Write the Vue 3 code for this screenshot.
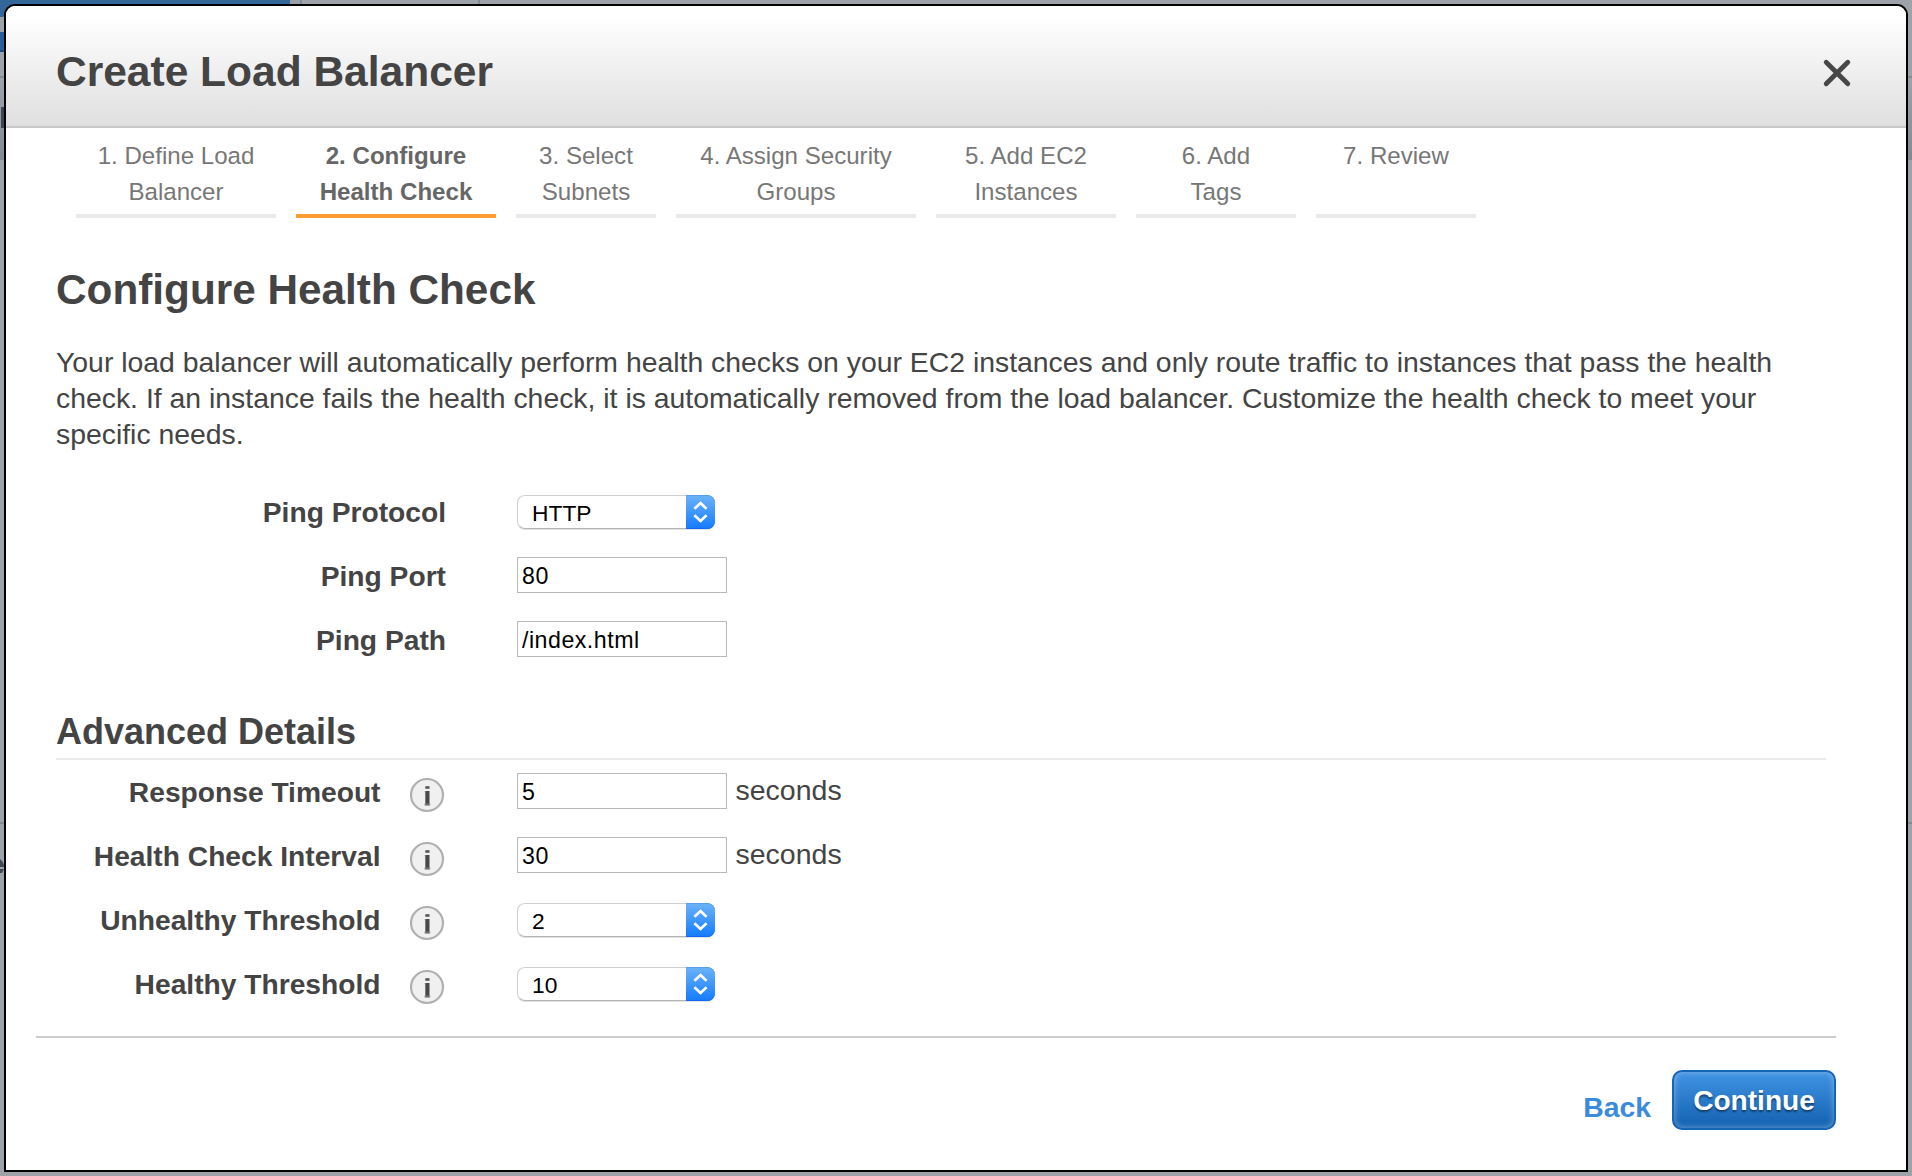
<script setup>
import { reactive } from 'vue'

const steps = [
  { lines: ['1. Define Load', 'Balancer'], width: 200 },
  { lines: ['2. Configure', 'Health Check'], width: 200, active: true },
  { lines: ['3. Select', 'Subnets'], width: 140 },
  { lines: ['4. Assign Security', 'Groups'], width: 240 },
  { lines: ['5. Add EC2', 'Instances'], width: 180 },
  { lines: ['6. Add', 'Tags'], width: 160 },
  { lines: ['7. Review'], width: 160 },
]

const pingFields = reactive([
  { label: 'Ping Protocol', type: 'select', value: 'HTTP' },
  { label: 'Ping Port', type: 'text', value: '80' },
  { label: 'Ping Path', type: 'text', value: '/index.html' },
])

const advancedFields = reactive([
  { label: 'Response Timeout', type: 'text', value: '5', unit: 'seconds' },
  { label: 'Health Check Interval', type: 'text', value: '30', unit: 'seconds' },
  { label: 'Unhealthy Threshold', type: 'select', value: '2' },
  { label: 'Healthy Threshold', type: 'select', value: '10' },
])

const groups = [
  { key: 'ping', fields: pingFields },
  { key: 'advanced', title: 'Advanced Details', fields: advancedFields, info: true },
]
</script>

<template>
  <div class="screen">
    <svg class="backdrop" width="1912" height="1176" aria-hidden="true">
      <defs>
        <linearGradient id="band" x1="0" y1="0" x2="0" y2="1">
          <stop offset="0" stop-color="#9ea2ab" />
          <stop offset="1" stop-color="#858993" />
        </linearGradient>
      </defs>
      <rect width="290" height="17" fill="#336699" />
      <rect x="290" width="10" height="5" fill="#9aa0a8" />
      <rect x="300" width="2" height="5" fill="#868a90" />
      <rect x="478" width="2" height="5" fill="#868a90" />
      <rect y="32" width="6" height="20" fill="#2a5e96" />
      <rect y="50" width="6" height="2" fill="#1f4c80" />
      <rect y="76" width="1912" height="2" fill="#858991" />
      <rect y="78" width="1912" height="80" fill="url(#band)" />
      <rect x="1" y="107" width="4" height="21" fill="#3f454e" />
      <rect y="158" width="1912" height="2" fill="#858991" />
      <rect y="822" width="1912" height="2" fill="#858991" />
      <path d="M0 859q4 3 4 8H0zM0 869h4l-2 4H0z" fill="#3f4754" />
    </svg>

    <section class="dialog" role="dialog">
      <header class="head">
        <h1>Create Load Balancer</h1>
        <svg class="close" width="30" height="30" viewBox="0 0 30 30">
          <path d="M4.2 4.2 25.8 25.8M25.8 4.2 4.2 25.8" fill="none" stroke="#484848" stroke-width="4.8" stroke-linecap="round" />
        </svg>
      </header>

      <nav class="steps">
        <div
          v-for="s in steps"
          :key="s.lines[0]"
          class="step"
          :class="{ active: s.active }"
          :style="{ width: s.width + 'px' }"
        >
          <div v-for="l in s.lines" :key="l">{{ l }}</div>
        </div>
      </nav>

      <main class="content">
        <h2>Configure Health Check</h2>
        <p class="intro">
          Your load balancer will automatically perform health checks on your EC2 instances and only route traffic to instances that pass the health<br />
          check. If an instance fails the health check, it is automatically removed from the load balancer. Customize the health check to meet your<br />
          specific needs.
        </p>

        <div v-for="g in groups" :key="g.key" :class="['group', g.key]">
          <h3 v-if="g.title">{{ g.title }}</h3>
          <div v-for="f in g.fields" :key="f.label" class="row">
            <label class="label">{{ f.label }}</label>
            <svg v-if="g.info" class="info" width="36" height="36" viewBox="0 0 36 36">
              <circle cx="18" cy="18" r="16" fill="#f0f0f0" stroke="#b0b0b0" stroke-width="2.2" />
              <path d="M16.3 9.2h4.2v2.6h-4.2z" fill="#555" />
              <path d="M16.3 14h4.2v14.4h-4.2z" fill="#484848" />
              <path d="M15.5 14h1v1.6h-1zM15.3 26.6h6.2v1.8h-6.2z" fill="#8a8a8a" fill-opacity=".6" />
            </svg>
            <div v-if="f.type === 'select'" class="select">
              <span class="value">{{ f.value }}</span>
              <i class="arrows">
                <svg width="15" height="22" viewBox="0 0 15 22">
                  <path d="M1.4 7.8 7.5 2l6.1 5.8M1.4 14.2l6.1 5.8 6.1-5.8" fill="none" stroke="#fff" stroke-width="2.6" />
                </svg>
              </i>
            </div>
            <input v-else v-model="f.value" class="input" type="text" />
            <span v-if="f.unit" class="unit">{{ f.unit }}</span>
          </div>
        </div>
      </main>

      <footer class="foot">
        <a class="back">Back</a>
        <button class="continue" type="button">Continue</button>
      </footer>
    </section>
  </div>
</template>

<style>
html,
body {
  margin: 0;
  overflow: hidden;
}
</style>

<style scoped>
.screen {
  position: relative;
  box-sizing: border-box;
  width: 1912px;
  height: 1176px;
  padding: 4px;
  overflow: hidden;
  background: #9ea2a9;
  color: #444;
  font-family: "Liberation Sans", Arial, sans-serif;
}
.backdrop {
  position: absolute;
  top: 0;
  left: 0;
}
.dialog {
  position: relative;
  box-sizing: border-box;
  display: flex;
  flex-direction: column;
  width: 1904px;
  height: 1168px;
  border: 2px solid #000;
  border-radius: 11px 11px 0 0;
  background: #fff;
  overflow: hidden;
}
h1,
h2,
h3,
p {
  margin: 0;
}
.head {
  box-sizing: border-box;
  display: flex;
  justify-content: space-between;
  align-items: flex-start;
  height: 122px;
  padding: 0 54px 0 50px;
  border-bottom: 2px solid #c8c8c8;
  background: linear-gradient(#fff 8%, #dfdfdf);
}
h1 {
  font-size: 42.5px;
  line-height: 132px;
}
.close {
  margin-top: 52px;
}
.steps {
  display: flex;
  gap: 20px;
  padding: 9px 0 0 70px;
}
.step {
  box-sizing: border-box;
  height: 81px;
  padding-top: 1px;
  border-bottom: 4px solid #ebebeb;
  color: #777;
  font-size: 24.1px;
  line-height: 36px;
  text-align: center;
}
.step.active {
  border-color: #ff9c30;
  color: #666;
  font-weight: bold;
}
.content {
  padding: 47px 80px 0 50px;
}
h2 {
  font-size: 42.3px;
  line-height: 50px;
}
.intro {
  margin: 29px 0 28px;
  font-size: 28.39px;
  line-height: 36px;
  white-space: nowrap;
}
h3 {
  margin-top: 37px;
  padding-bottom: 4px;
  border-bottom: 2px solid #eaeaea;
  font-size: 36px;
  line-height: 45px;
}
.row {
  display: flex;
  align-items: center;
  height: 64px;
}
.label {
  width: 390px;
  margin-right: 71px;
  font-size: 28.2px;
  font-weight: bold;
  text-align: right;
  white-space: nowrap;
}
.advanced .label {
  width: 324.5px;
  margin-right: 28.5px;
}
.info {
  margin: 6px 72px 0 0;
}
.select {
  box-sizing: border-box;
  display: flex;
  justify-content: space-between;
  align-items: center;
  width: 198px;
  height: 34px;
  padding-left: 14px;
  border: 1px solid #d0d0d0;
  border-bottom-color: #b4b4b4;
  border-right: 0;
  border-radius: 8px;
  box-shadow: 0 1px 1px rgba(0, 0, 0, 0.12);
  color: #000;
  font-size: 22.8px;
}
.value {
  padding-top: 2px;
}
.arrows {
  display: flex;
  justify-content: center;
  align-items: center;
  width: 29px;
  height: 34px;
  margin: -1px 0;
  border-radius: 0 8px 8px 0;
  background: linear-gradient(#6cb3fa, #147bfe);
  box-shadow: inset 0 1px #5a9fec, inset 0 -1px #1268f5;
}
.input {
  box-sizing: border-box;
  width: 210px;
  height: 36px;
  margin: 0 0 2px;
  padding: 3px 3px 0 4px;
  border: 1px solid #b9b9b9;
  border-radius: 0;
  outline: 0;
  background: #fff;
  color: #000;
  font-family: inherit;
  font-size: 23.2px;
  letter-spacing: 0.5px;
}
.unit {
  margin: 0 0 4px 8.5px;
  font-size: 28.5px;
}
.foot {
  display: flex;
  justify-content: flex-end;
  align-items: flex-start;
  margin: 20px 70px 0 30px;
  padding-top: 32px;
  border-top: 2px solid #ccc;
  font-size: 28.3px;
  font-weight: bold;
}
.back {
  margin-right: 21px;
  color: #3a8bdb;
  line-height: 75px;
}
.continue {
  width: 164px;
  height: 60px;
  padding: 1px 0 0;
  border: 2px solid #1565b7;
  border-radius: 10px;
  background: linear-gradient(#3b8ede 12%, #1766b5 90%);
  box-shadow: inset 0 0 6px rgba(255, 255, 255, 0.4);
  color: #fff;
  font: bold 28.1px "Liberation Sans", Arial, sans-serif;
  text-shadow: 0 2px 2px rgba(0, 0, 0, 0.45);
}
</style>
